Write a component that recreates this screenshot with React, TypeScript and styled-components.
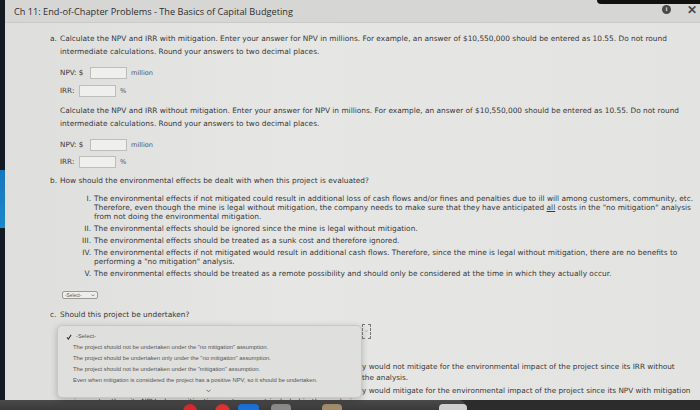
import React from "react";
import styled, {createGlobalStyle} from "styled-components";

const GlobalStyle = createGlobalStyle`
    html, body {
        margin: 0;
        padding: 0;
    }
    body {
        width: 700px;
        height: 410px;
        overflow: hidden;
        background: #1b1b1b;
    }
`;

const Screen = styled.div`
    width: 700px;
    height: 410px;
    display: flex;
    flex-direction: column;
    overflow: hidden;
`;

const Desk = styled.div`
    flex: 1;
    display: flex;
    min-height: 0;
`;

const EdgeStrip = styled.div`
    width: 5px;
    flex: none;
    background: linear-gradient(to bottom, #141a21 0, #141a21 170px, #1776bb 170px, #1b88cc 228px, #141a21 228px);
`;

const Window = styled.div`
    flex: 1;
    min-width: 0;
    display: flex;
    flex-direction: column;
    position: relative;
    background: linear-gradient(to right, #dededc, #e6e6e4 40%, #e3e3e1);
    color: #383838;
    font-family: "DejaVu Sans", Verdana, sans-serif;
`;

const TitleBar = styled.header`
    height: 22px;
    flex: none;
    display: flex;
    align-items: center;
    padding-left: 9px;
    background: #d6d6d4;
    border-bottom: 1px solid #cacac8;
    position: relative;
`;

const Title = styled.h1`
    margin: 0;
    font-family: "Open Sans", sans-serif;
    font-weight: 400;
    font-size: 9.2px;
    color: #2e2e2e;
`;

const TopBezel = styled.div`
    position: absolute;
    top: 0;
    right: 0;
    width: 103px;
    height: 4px;
    background: #111;
    border-bottom-left-radius: 4px;
`;

const Controls = styled.div`
    margin-left: auto;
    margin-right: 3px;
    display: flex;
    align-items: center;
    gap: 16px;
    margin-top: -3px;
`;

const InfoDot = styled.span`
    width: 9px;
    height: 9px;
    border-radius: 50%;
    background: #4a4a4a;
    color: #ddd;
    font-family: "Liberation Serif", serif;
    font-weight: 700;
    font-size: 7px;
    line-height: 9px;
    text-align: center;
`;

const Close = styled.span`
    font-family: "Liberation Sans", sans-serif;
    font-weight: 700;
    font-size: 12px;
    line-height: 10px;
    color: #4c4c4c;
`;

const Content = styled.main`
    flex: 1;
    min-height: 0;
    overflow: hidden;
    padding: 9px 0 0 45px;
    font-size: 7.4px;
`;

const Part = styled.section<{ $gap?: number }>`
    display: grid;
    grid-template-columns: 10px 1fr;
    margin-top: ${p => p.$gap ?? 0}px;
`;

const Marker = styled.span`
    line-height: 13px;
`;

const Stack = styled.div`
    display: flex;
    flex-direction: column;
`;

const Para = styled.p<{ $gap?: number }>`
    margin: ${p => p.$gap ?? 0}px 0 0;
    line-height: 13px;
`;

const Line = styled.span`
    display: block;
    white-space: nowrap;
`;

const Field = styled.div<{ $gap: number }>`
    display: flex;
    align-items: center;
    height: 13px;
    margin-top: ${p => p.$gap}px;
    font-size: 7.2px;
`;

const Label = styled.span<{ $w: number }>`
    width: ${p => p.$w}px;
`;

const Input = styled.span`
    width: 35px;
    height: 10px;
    background: #efefee;
    border: 1px solid #bdbdbb;
    margin-right: 4px;
`;

const Unit = styled.span`
    color: #555;
    font-size: 6.6px;
`;

const Roman = styled.ol`
    list-style: none;
    margin: 7px 0 0;
    padding: 0;
    display: flex;
    flex-direction: column;
    gap: 3px;
    line-height: 9px;
`;

const RomanItem = styled.li`
    display: grid;
    grid-template-columns: 31px 1fr;
    column-gap: 3px;
`;

const Numeral = styled.span`
    text-align: right;
`;

const Under = styled.span`
    text-decoration: underline;
`;

const MiniSelect = styled.div`
    margin: 13px 0 0 2px;
    width: 36px;
    height: 8px;
    display: flex;
    align-items: center;
    justify-content: space-between;
    padding: 0 2px;
    box-sizing: border-box;
    border: 1px solid #9a9a98;
    border-radius: 2px;
    background: #ededec;
    font-family: "Liberation Sans", sans-serif;
    font-size: 4.8px;
    color: #555;
`;

const Options = styled.div`
    margin: 16px 0 0 24px;
    display: flex;
    flex-direction: column;
    gap: 2px;
    line-height: 11px;
    font-size: 7.3px;
`;

const OptionRow = styled.div`
    display: grid;
    grid-template-columns: 288px 1fr;
    white-space: nowrap;
`;

const Covered = styled.span`
    height: 11px;
`;

const Wide = styled.span`
    grid-column: 1 / 3;
`;

const Popup = styled.div`
    position: absolute;
    left: 52px;
    top: 325px;
    width: 305px;
    height: 73px;
    box-sizing: border-box;
    padding: 5px 0 0 8px;
    background: #dfdfde;
    border: 1px solid #c8c8c6;
    border-radius: 5px;
    box-shadow: 0 2px 7px rgba(0, 0, 0, 0.22);
    font-family: "Liberation Sans", sans-serif;
    font-size: 5.85px;
    color: #555;
    display: flex;
    flex-direction: column;
`;

const PopupItem = styled.div<{ $first?: boolean }>`
    height: 11px;
    line-height: 11px;
    padding-left: ${p => (p.$first ? 0 : 7)}px;
    white-space: nowrap;
    display: flex;
    align-items: center;
    gap: 4px;
`;

const More = styled.div`
    align-self: center;
    margin: 1px 0 0 -10px;
`;

const FocusRing = styled.div`
    position: absolute;
    left: 357px;
    top: 324px;
    width: 7px;
    height: 13px;
    border: 1px dashed #777;
    display: flex;
    align-items: center;
    justify-content: center;
`;

const Dock = styled.footer`
    height: 10px;
    flex: none;
    display: flex;
    background: #2c2c2c;
    overflow: hidden;
`;

const Shelf = styled.div`
    width: 465px;
    display: flex;
    align-items: flex-start;
    padding-left: 183px;
    box-sizing: border-box;
    background: linear-gradient(#4a4a4a, #3a3a3a);
    border-top-right-radius: 6px;
`;

const DockIcon = styled.span<{ $c: string; $w: number; $gap: number; $round?: boolean }>`
    width: ${p => p.$w}px;
    height: 16px;
    margin: 4px 0 0 ${p => p.$gap}px;
    background: ${p => p.$c};
    border-radius: ${p => (p.$round ? "50%" : "4px")};
    flex: none;
`;

const Chevron = ({size = 5}: { size?: number }) => (
    <svg width={size} height={size * 0.7} viewBox="0 0 10 7">
        <path d="M1 1.5 L5 5.5 L9 1.5" fill="none" stroke="#555" strokeWidth="1.6"/>
    </svg>
);

const Check = () => (
    <svg width="6" height="6" viewBox="0 0 10 10">
        <path d="M1.5 5.5 L4 8.5 L8.5 1.5" fill="none" stroke="#333" strokeWidth="1.8"/>
    </svg>
);

const popupChoices = [
    "The project should not be undertaken under the \"no mitigation\" assumption.",
    "The project should be undertaken only under the \"no mitigation\" assumption.",
    "The project should not be undertaken under the \"mitigation\" assumption.",
    "Even when mitigation is considered the project has a positive NPV, so it should be undertaken."
];

export default function App() {
    return (
        <Screen>
            <GlobalStyle/>
            <Desk>
                <EdgeStrip/>
                <Window>
                    <TitleBar>
                        <TopBezel/>
                        <Title>Ch 11: End-of-Chapter Problems - The Basics of Capital Budgeting</Title>
                        <Controls>
                            <InfoDot>i</InfoDot>
                            <Close>✕</Close>
                        </Controls>
                    </TitleBar>
                    <Content>
                        <Part>
                            <Marker>a.</Marker>
                            <Stack>
                                <Para>
                                    <Line>Calculate the NPV and IRR with mitigation. Enter your answer for NPV in millions. For example, an answer of $10,550,000 should be entered as 10.55. Do not round</Line>
                                    <Line>intermediate calculations. Round your answers to two decimal places.</Line>
                                </Para>
                                <Field $gap={8}>
                                    <Label $w={30}>NPV: $</Label>
                                    <Input/>
                                    <Unit>million</Unit>
                                </Field>
                                <Field $gap={5}>
                                    <Label $w={19}>IRR:</Label>
                                    <Input/>
                                    <Unit>%</Unit>
                                </Field>
                                <Para $gap={7}>
                                    <Line>Calculate the NPV and IRR without mitigation. Enter your answer for NPV in millions. For example, an answer of $10,550,000 should be entered as 10.55. Do not round</Line>
                                    <Line>intermediate calculations. Round your answers to two decimal places.</Line>
                                </Para>
                                <Field $gap={8}>
                                    <Label $w={30}>NPV: $</Label>
                                    <Input/>
                                    <Unit>million</Unit>
                                </Field>
                                <Field $gap={4}>
                                    <Label $w={19}>IRR:</Label>
                                    <Input/>
                                    <Unit>%</Unit>
                                </Field>
                            </Stack>
                        </Part>
                        <Part $gap={6}>
                            <Marker>b.</Marker>
                            <Stack>
                                <Para>How should the environmental effects be dealt with when this project is evaluated?</Para>
                                <Roman>
                                    <RomanItem>
                                        <Numeral>I.</Numeral>
                                        <span>
                                            <Line>The environmental effects if not mitigated could result in additional loss of cash flows and/or fines and penalties due to ill will among customers, community, etc.</Line>
                                            <Line>Therefore, even though the mine is legal without mitigation, the company needs to make sure that they have anticipated <Under>all</Under> costs in the "no mitigation" analysis</Line>
                                            <Line>from not doing the environmental mitigation.</Line>
                                        </span>
                                    </RomanItem>
                                    <RomanItem>
                                        <Numeral>II.</Numeral>
                                        <Line>The environmental effects should be ignored since the mine is legal without mitigation.</Line>
                                    </RomanItem>
                                    <RomanItem>
                                        <Numeral>III.</Numeral>
                                        <Line>The environmental effects should be treated as a sunk cost and therefore ignored.</Line>
                                    </RomanItem>
                                    <RomanItem>
                                        <Numeral>IV.</Numeral>
                                        <span>
                                            <Line>The environmental effects if not mitigated would result in additional cash flows. Therefore, since the mine is legal without mitigation, there are no benefits to</Line>
                                            <Line>performing a "no mitigation" analysis.</Line>
                                        </span>
                                    </RomanItem>
                                    <RomanItem>
                                        <Numeral>V.</Numeral>
                                        <Line>The environmental effects should be treated as a remote possibility and should only be considered at the time in which they actually occur.</Line>
                                    </RomanItem>
                                </Roman>
                                <MiniSelect>-Select- <Chevron size={4}/></MiniSelect>
                            </Stack>
                        </Part>
                        <Part $gap={9}>
                            <Marker>c.</Marker>
                            <Stack>
                                <Para>Should this project be undertaken?</Para>
                            </Stack>
                        </Part>
                        {/* answer choices for c., mostly covered by the open dropdown */}
                        <Options>
                            <OptionRow>
                                <Covered/>
                                <Covered/>
                                <Covered/>
                                <Covered/>
                            </OptionRow>
                            <OptionRow>
                                <Covered/>
                                <span>y would not mitigate for the environmental impact of the project since its IRR without</span>
                                <Covered/>
                                <span>the analysis.</span>
                            </OptionRow>
                            <OptionRow>
                                <Covered/>
                                <span>y would mitigate for the environmental impact of the project since its NPV with mitigation</span>
                                <Wide>is greater than its NPV when mitigation costs are not included in the analysis.</Wide>
                            </OptionRow>
                        </Options>
                    </Content>
                    <Popup>
                        <PopupItem $first><Check/>-Select-</PopupItem>
                        {popupChoices.map(choice => (
                            <PopupItem key={choice}>{choice}</PopupItem>
                        ))}
                        <More><Chevron size={5}/></More>
                    </Popup>
                    <FocusRing><Chevron size={3}/></FocusRing>
                </Window>
            </Desk>
            <Dock>
                <Shelf>
                    <DockIcon $c="#d8282c" $w={14} $gap={0} $round/>
                    <DockIcon $c="#e0302f" $w={15} $gap={18} $round/>
                    <DockIcon $c="#1c6fd6" $w={21} $gap={8}/>
                    <DockIcon $c="#8a8a88" $w={20} $gap={12}/>
                    <DockIcon $c="#a08b6a" $w={20} $gap={31}/>
                    <DockIcon $c="#cfcfcf" $w={28} $gap={97}/>
                </Shelf>
            </Dock>
        </Screen>
    );
}
